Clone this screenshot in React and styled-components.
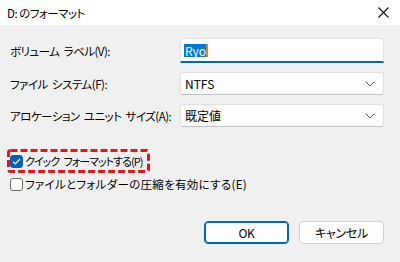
import React from "react";
import styled, { createGlobalStyle } from "styled-components";

const GlobalStyle = createGlobalStyle`
  html, body {
    margin: 0;
    padding: 0;
    background: #f0f0f0;
  }
  body {
    font-family: "Noto Sans CJK JP", "Noto Sans", sans-serif;
    font-size: 11.5px;
    font-feature-settings: "palt" 1;
    letter-spacing: -0.5px;
    color: #000;
  }
`;

function Chevron() {
  return (
    <svg width="10" height="6" viewBox="0 0 10 6">
      <path d="M0.5 0.5 L5 5 L9.5 0.5" fill="none" stroke="#555" strokeWidth="1" />
    </svg>
  );
}

function CloseIcon() {
  return (
    <svg width="11" height="11" viewBox="0 0 11 11">
      <path d="M0.5 0.5 L10.5 10.5 M10.5 0.5 L0.5 10.5" stroke="#111" strokeWidth="1.1" />
    </svg>
  );
}

function CheckMark() {
  return (
    <svg width="9" height="7" viewBox="0 0 9 7">
      <path d="M1 3.6 L3.3 5.8 L8 1" fill="none" stroke="#fff" strokeWidth="1.2" />
    </svg>
  );
}

function App() {
  return (
    <Window>
      <GlobalStyle />
      <TitleBar>
        <Title>D: のフォーマット</Title>
        <CloseButton>
          <CloseIcon />
        </CloseButton>
      </TitleBar>

      <Content>
        <Form>
          <Label>ボリューム ラベル(V):</Label>
          <TextField>
            <Selected>Ryo</Selected>
            <Caret />
          </TextField>

          <Label>ファイル システム(F):</Label>
          <Select>
            <span>NTFS</span>
            <Chevron />
          </Select>

          <Label>アロケーション ユニット サイズ(A):</Label>
          <Select>
            <span>既定値</span>
            <Chevron />
          </Select>
        </Form>

        <Options>
          <Highlight>
            <CheckRow tight>
              <Box checked>
                <CheckMark />
              </Box>
              クイック フォーマットする(P)
            </CheckRow>
            <DashFrame width="143" height="24">
              <rect
                x="1.5"
                y="1.5"
                width="140"
                height="21"
                rx="2"
                fill="none"
                stroke="#e8141a"
                strokeWidth="3"
                strokeDasharray="7 3"
              />
            </DashFrame>
          </Highlight>
          <CheckRow>
            <Box />
            ファイルとフォルダーの圧縮を有効にする(E)
          </CheckRow>
        </Options>

        <Buttons>
          <Button primary>OK</Button>
          <Button>キャンセル</Button>
        </Buttons>
      </Content>
    </Window>
  );
}

export default App;

const Window = styled.div`
  width: 400px;
  height: 262px;
  background: #f0f0f0;
  display: flex;
  flex-direction: column;
  overflow: hidden;
`;

const TitleBar = styled.div`
  height: 25px;
  background: #fff;
  display: flex;
  align-items: center;
  justify-content: space-between;
  padding: 0 11px 0 7px;
`;

const Title = styled.div`
  font-size: 11.5px;
`;

const CloseButton = styled.div`
  display: flex;
  align-items: center;
`;

const Content = styled.div`
  flex: 1;
  padding: 13px 16px 0 10px;
  display: flex;
  flex-direction: column;
`;

const Form = styled.div`
  display: grid;
  grid-template-columns: 170px 204px;
  grid-template-rows: 25px 23px 23px;
  row-gap: 9px;
  align-items: center;
`;

const Label = styled.div`
  white-space: nowrap;
  word-spacing: 2px;
`;

const TextField = styled.div`
  height: 25px;
  box-sizing: border-box;
  background: #fff;
  border: 1px solid #e3e3e3;
  border-bottom: 2px solid #0067c0;
  border-radius: 3px 3px 0 0;
  display: flex;
  align-items: center;
  padding-left: 3px;
  letter-spacing: 0;
  font-size: 12px;
`;

const Selected = styled.span`
  background: #0078d7;
  color: #fff;
  line-height: 13px;
  padding: 0 0 0 1px;
`;

const Caret = styled.span`
  width: 2px;
  height: 13px;
  background: #f07c00;
`;

const Select = styled.div`
  height: 23px;
  box-sizing: border-box;
  background: #fdfdfd;
  border: 1px solid #e0e0e0;
  border-bottom-color: #c4c4c4;
  border-radius: 3px;
  display: flex;
  align-items: center;
  justify-content: space-between;
  padding: 0 8px 0 4px;
  font-size: 12px;
  letter-spacing: 0;
`;

const Options = styled.div`
  margin-top: 22px;
  display: flex;
  flex-direction: column;
  gap: 3px;
`;

const Highlight = styled.div`
  position: relative;
  width: 143px;
  height: 24px;
  margin-left: -3px;
  padding-left: 3px;
  box-sizing: border-box;
  display: flex;
  align-items: center;
`;

const DashFrame = styled.svg`
  position: absolute;
  left: 0;
  top: 0;
`;

const CheckRow = styled.label`
  display: flex;
  align-items: center;
  gap: 2px;
  white-space: nowrap;
  font-size: ${(p) => (p.tight ? "11px" : "11.5px")};
  letter-spacing: ${(p) => (p.tight ? "-1px" : "0.3px")};
  word-spacing: ${(p) => (p.tight ? "3px" : "0")};
`;

const Box = styled.span`
  width: 13px;
  height: 13px;
  box-sizing: border-box;
  border-radius: 3px;
  display: flex;
  align-items: center;
  justify-content: center;
  background: ${(p) => (p.checked ? "#005fb8" : "#fff")};
  border: 1px solid ${(p) => (p.checked ? "#005fb8" : "#6a6a6a")};
`;

const Buttons = styled.div`
  margin-top: auto;
  margin-bottom: 18px;
  display: flex;
  justify-content: flex-end;
  gap: 10px;
`;

const Button = styled.button`
  width: 85px;
  height: 23px;
  box-sizing: border-box;
  font-family: inherit;
  font-size: 12px;
  font-feature-settings: "palt" 1;
  letter-spacing: -0.3px;
  color: #000;
  background: #fdfdfd;
  border: 1px solid ${(p) => (p.primary ? "#0067c0" : "#d0d0d0")};
  box-shadow: ${(p) => (p.primary ? "inset 0 0 0 1px #0067c0" : "none")};
  border-radius: 4px;
`;
